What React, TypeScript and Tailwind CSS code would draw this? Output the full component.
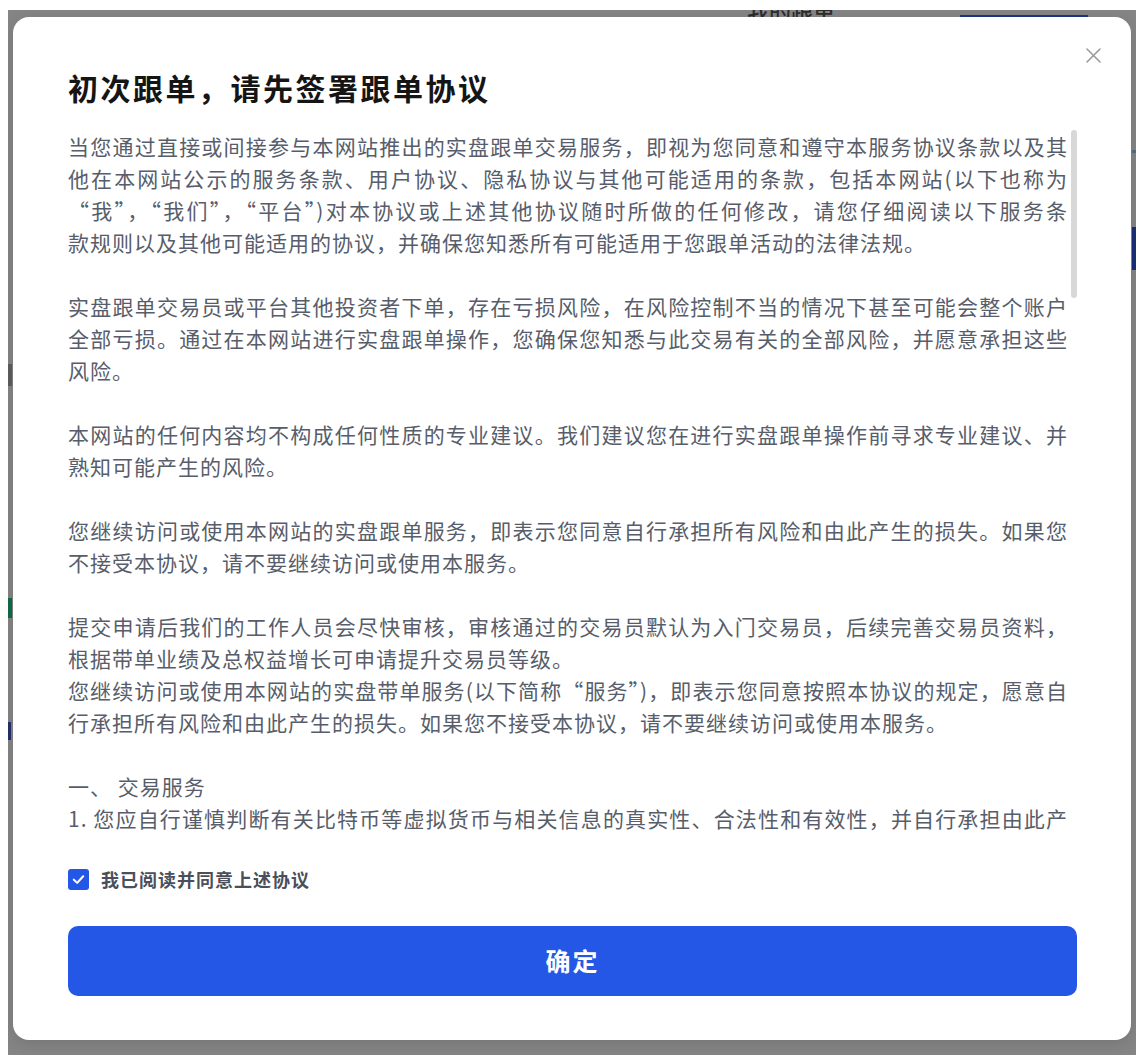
import React from "react";

type Line = [string, boolean];

const blocks: Line[][] = [
  [
    ["当您通过直接或间接参与本网站推出的实盘跟单交易服务，即视为您同意和遵守本服务协议条款以及其", true],
    ["他在本网站公示的服务条款、用户协议、隐私协议与其他可能适用的条款，包括本网站(以下也称为", true],
    ["“我”，“我们”，“平台”)对本协议或上述其他协议随时所做的任何修改，请您仔细阅读以下服务条", true],
    ["款规则以及其他可能适用的协议，并确保您知悉所有可能适用于您跟单活动的法律法规。", false],
  ],
  [
    ["实盘跟单交易员或平台其他投资者下单，存在亏损风险，在风险控制不当的情况下甚至可能会整个账户", true],
    ["全部亏损。通过在本网站进行实盘跟单操作，您确保您知悉与此交易有关的全部风险，并愿意承担这些", true],
    ["风险。", false],
  ],
  [
    ["本网站的任何内容均不构成任何性质的专业建议。我们建议您在进行实盘跟单操作前寻求专业建议、并", true],
    ["熟知可能产生的风险。", false],
  ],
  [
    ["您继续访问或使用本网站的实盘跟单服务，即表示您同意自行承担所有风险和由此产生的损失。如果您", true],
    ["不接受本协议，请不要继续访问或使用本服务。", false],
  ],
  [
    ["提交申请后我们的工作人员会尽快审核，审核通过的交易员默认为入门交易员，后续完善交易员资料，", true],
    ["根据带单业绩及总权益增长可申请提升交易员等级。", false],
    ["您继续访问或使用本网站的实盘带单服务(以下简称“服务”)，即表示您同意按照本协议的规定，愿意自", true],
    ["行承担所有风险和由此产生的损失。如果您不接受本协议，请不要继续访问或使用本服务。", false],
  ],
  [
    ["一、 交易服务", false],
    ["1. 您应自行谨慎判断有关比特币等虚拟货币与相关信息的真实性、合法性和有效性，并自行承担由此产", true],
    ["生的责任与损失。", false],
    ["2. 您在本网站进行的实盘跟单交易均由您本人自主决定，平台不对任何交易结果作出承诺或保证。", false],
  ],
];

export default function App() {
  return (
    <div
      className="w-[1144px] h-[1058px] bg-white pl-[8px] pt-[10px] overflow-hidden"
      style={{ fontFamily: '"Noto Sans CJK SC", "Noto Sans", sans-serif' }}
    >
      <div className="relative w-[1128px] h-[1045px] bg-[#858585] overflow-hidden pl-[5px] pt-[7px]">
        {/* page underneath the overlay */}
        <div className="absolute left-[739px] top-[-16px] text-[22px] font-medium text-[#2c2c2c]">我的跟单</div>
        <div className="absolute left-[952px] top-[5px] w-[128px] h-[20px] bg-[#1d3685]" />
        <div className="absolute left-[1124px] top-[140px] w-[4px] h-[3px] bg-[#4f6f86]" />
        <div className="absolute left-[1124px] top-[217px] w-[4px] h-[43px] bg-[#1b2f78]" />
        <div className="absolute left-[0px] top-[354px] w-[4px] h-[22px] bg-[#5d5d5d]" />
        <div className="absolute left-[0px] top-[588px] w-[4px] h-[20px] bg-[#0f6b47]" />
        <div className="absolute left-[0px] top-[712px] w-[3px] h-[18px] bg-[#23306a]" />

        {/* modal */}
        <div className="relative w-[1118px] h-[1023px] bg-white rounded-[16px] shadow-[0_4px_16px_rgba(0,0,0,0.12)] pl-[55px] pr-[54px] pt-[50px]">
          <button className="absolute left-[1073px] top-[31px] w-[15px] h-[15px]">
            <svg viewBox="0 0 15 15" width="15" height="15" fill="none" stroke="#9b9b9b" strokeWidth="1.6" strokeLinecap="round">
              <path d="M1 1 L14 14 M14 1 L1 14" />
            </svg>
          </button>

          <h1 className="h-[40px] leading-[40px] text-[30px] font-bold tracking-[2.5px] text-[#151515]">
            初次跟单，请先签署跟单协议
          </h1>

          <div className="relative mt-[23px] h-[710px] overflow-hidden">
            <div className="w-[1000px] text-[21px] leading-[32px] tracking-[1px] text-[#575d6a] flex flex-col gap-[32px]">
              {blocks.map((b, i) => (
                <div key={i}>
                  {b.map(([t, j], k) => (
                    <div key={k} className={j ? "text-justify [text-align-last:justify]" : "text-left"}>
                      {t}
                    </div>
                  ))}
                </div>
              ))}
            </div>
            <div className="absolute right-0 top-0 w-[6px] h-[168px] rounded-full bg-[#d8d8d8]" />
          </div>

          <label className="mt-[27px] h-[24px] flex items-center gap-[12px] cursor-pointer">
            <span className="w-[21px] h-[21px] rounded-[3px] bg-[#2457e6] flex items-center justify-center">
              <svg viewBox="0 0 16 16" width="15" height="15" fill="none" stroke="white" strokeWidth="2.2" strokeLinecap="round" strokeLinejoin="round">
                <path d="M3 8.2 L6.6 11.6 L13 4.6" />
              </svg>
            </span>
            <span className="text-[18px] font-bold tracking-[1px] text-[#4a4f5b]">我已阅读并同意上述协议</span>
          </label>

          <button className="mt-[35px] w-full h-[70px] rounded-[10px] bg-[#2457e6] text-white text-[25px] font-bold tracking-[2px]">
            确定
          </button>
        </div>
      </div>
    </div>
  );
}
